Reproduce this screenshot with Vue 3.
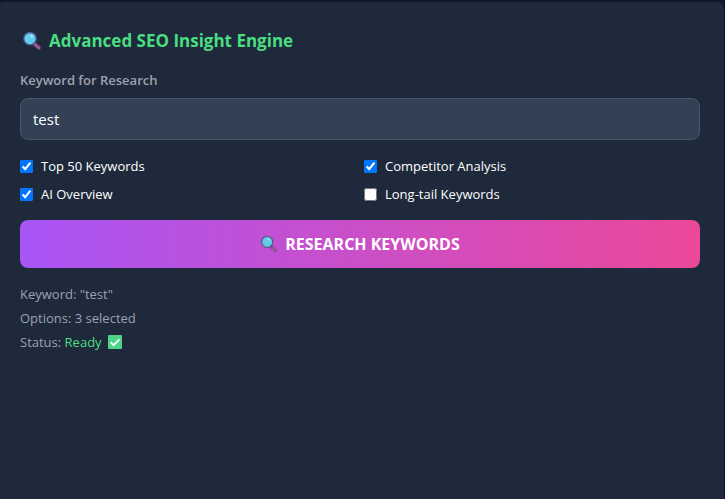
<script setup>
import { computed, ref } from 'vue'

const keyword = ref('test')
const options = ref([
  { id: 'top', label: 'Top 50 Keywords', checked: true },
  { id: 'competitor', label: 'Competitor Analysis', checked: true },
  { id: 'overview', label: 'AI Overview', checked: true },
  { id: 'longtail', label: 'Long-tail Keywords', checked: false },
])
const selected = computed(() => options.value.filter((o) => o.checked).length)
</script>

<template>
  <main class="page">
    <section class="panel">
      <h1 class="title">
        <svg class="lens" viewBox="0 0 20 20" aria-hidden="true">
          <path d="M11.8 12.2l5.1 4.7" stroke="#513a63" stroke-width="4.2" stroke-linecap="round" />
          <path d="M13 13.3l3.9 3.5" stroke="#955a96" stroke-width="3" stroke-linecap="round" />
          <circle cx="8" cy="7.7" r="6.2" fill="#62ceef" stroke="#505b91" stroke-width="1.3" />
          <circle cx="9.8" cy="5.1" r="1.2" fill="#b5edfb" />
        </svg>
        <span>Advanced SEO Insight Engine</span>
      </h1>

      <label class="field-label" for="keyword">Keyword for Research</label>
      <input id="keyword" v-model="keyword" class="field" type="text" />

      <div class="options">
        <label v-for="o in options" :key="o.id" class="option" :for="o.id">
          <input :id="o.id" v-model="o.checked" class="tick" type="checkbox" />
          <span>{{ o.label }}</span>
        </label>
      </div>

      <button class="submit" type="button">
        <svg class="lens small" viewBox="0 0 20 20" aria-hidden="true">
          <path d="M11.8 12.2l5.1 4.7" stroke="#714576" stroke-width="4" stroke-linecap="round" />
          <path d="M14 14.2l2.9 2.6" stroke="#965a91" stroke-width="3" stroke-linecap="round" />
          <circle cx="8" cy="7.7" r="6.2" fill="#62cbe8" stroke="#5a5791" stroke-width="1.5" />
          <circle cx="9.8" cy="5.1" r="1.2" fill="#a5e5f5" />
        </svg>
        <span>RESEARCH KEYWORDS</span>
      </button>

      <div class="summary">
        <p>Keyword: "{{ keyword }}"</p>
        <p>Options: {{ selected }} selected</p>
        <p class="status">
          <span>Status: <span class="ready">Ready</span></span>
          <svg class="done" viewBox="0 0 14 14" aria-hidden="true">
            <rect width="14" height="14" rx="1" fill="#4fd389" />
            <path d="M2.6 7.2l3 3 5.8-5.9" fill="none" stroke="#fff" stroke-width="1.7" />
          </svg>
        </p>
      </div>
    </section>
  </main>
</template>

<style>
body {
  background: #0f172a;
}
</style>

<style scoped>
.page {
  display: flex;
  box-sizing: border-box;
  min-height: 100vh;
  padding: 2px 1px 0 0;
  font-family: "Segoe UI", "Open Sans", "Noto Sans", sans-serif;
  font-size: 13px;
  color: #fff;
}

.panel {
  flex: 1;
  padding: 24px 24px 24px 20px;
  border-radius: 3px 8px 0 0;
  background: #1e293b;
}

.title {
  display: flex;
  align-items: center;
  gap: 7px;
  margin: 0 0 12px;
  padding-left: 2px;
  font-size: 17px;
  line-height: 30px;
  font-weight: 700;
  color: #4ade80;
}

.lens {
  width: 20px;
  height: 20px;
  fill: none;
}

.small {
  width: 18px;
  height: 18px;
}

.field-label {
  display: block;
  margin-bottom: 6px;
  line-height: 24px;
  font-weight: 600;
  color: #9ca3af;
}

.field {
  display: block;
  box-sizing: border-box;
  width: 100%;
  height: 42px;
  padding: 0 12px;
  border: 1px solid #475569;
  border-radius: 8px;
  outline: none;
  background: #334155;
  font: inherit;
  font-size: 15px;
  color: #fff;
}

.options {
  display: grid;
  grid-template-columns: 1fr 1fr;
  gap: 8px;
  margin: 16px 0;
}

.option {
  display: flex;
  align-items: center;
  gap: 8px;
  line-height: 20px;
}

.tick {
  width: 13px;
  height: 13px;
  margin: 0;
}

.submit {
  display: flex;
  align-items: center;
  justify-content: center;
  gap: 7px;
  width: 100%;
  height: 48px;
  border: 0;
  border-radius: 8px;
  background: linear-gradient(90deg, #a855f7, #ec4899);
  font: inherit;
  font-size: 16px;
  font-weight: 700;
  color: #fff;
}

.summary {
  margin-top: 14px;
  line-height: 24px;
  color: #9ca3af;
}

.summary p {
  margin: 0;
}

.summary .status {
  display: flex;
  align-items: center;
  gap: 6px;
}

.ready {
  color: #4ade80;
}

.done {
  width: 14px;
  height: 14px;
}
</style>
